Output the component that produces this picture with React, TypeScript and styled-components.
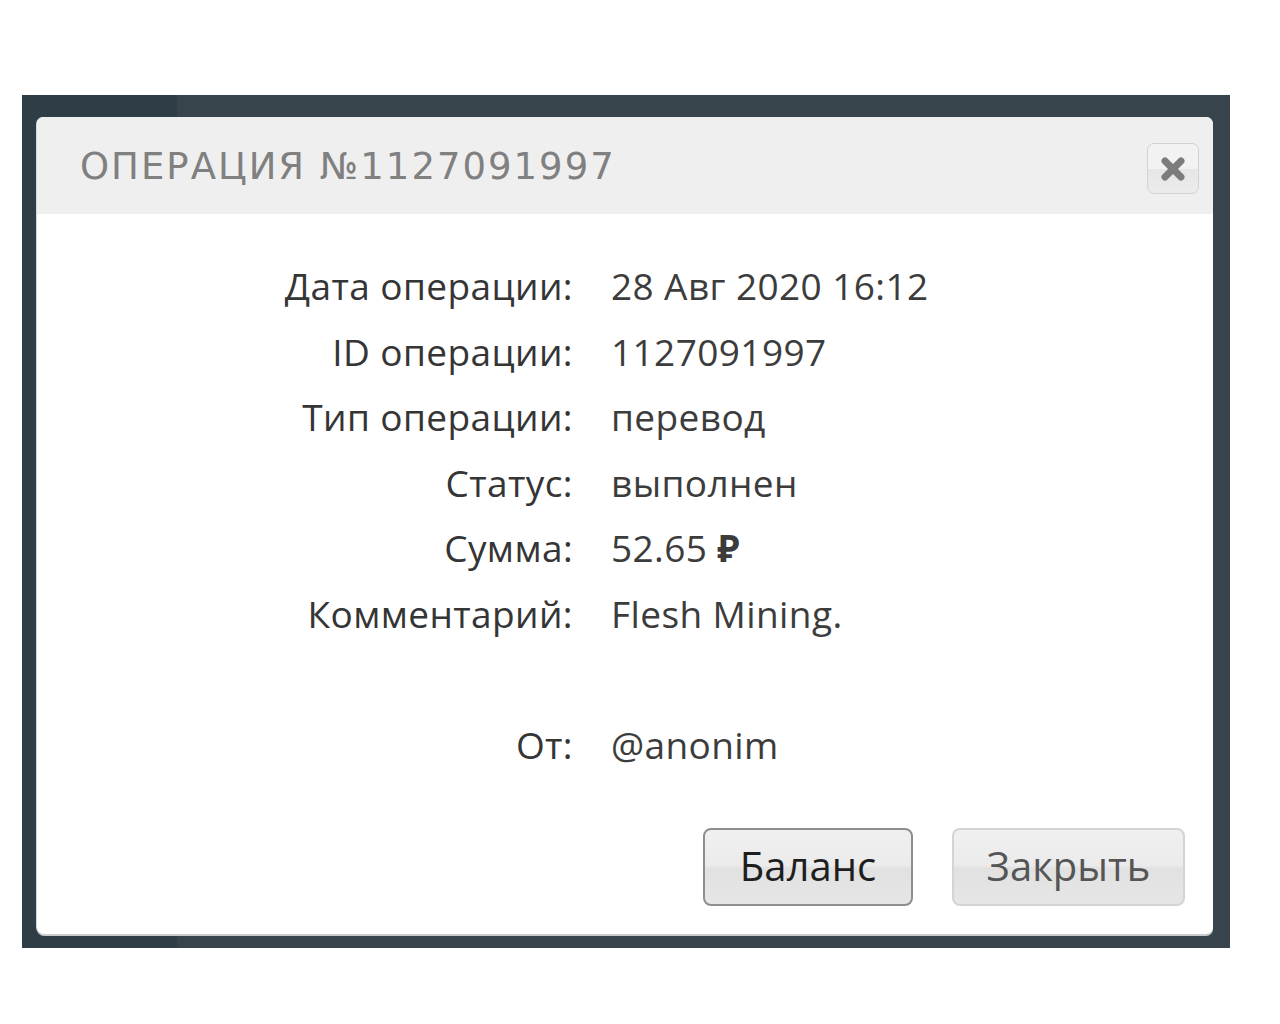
import React from "react";
import styled, { createGlobalStyle } from "styled-components";

const Global = createGlobalStyle`
  html, body { margin: 0; padding: 0; background: #ffffff; }
  body { width: 1280px; height: 1024px; overflow: hidden; }
`;

const Page = styled.div`
  width: 1280px;
  height: 1024px;
  padding-top: 95px;
  padding-left: 22px;
  box-sizing: border-box;
`;

const Backdrop = styled.div`
  width: 1208px;
  height: 853px;
  box-sizing: border-box;
  padding: 22px 17px 14px 15px;
  background: linear-gradient(to right, #2f3d47 0, #2f3d47 155px, #38444c 155px, #38444c 100%);
`;

const Modal = styled.div`
  width: 1176px;
  height: 817px;
  background: #ffffff;
  border-radius: 7px;
  box-shadow: 0 2px 0 #c9cbcd, -1px 0 0 #d6d8da;
  display: flex;
  flex-direction: column;
  overflow: hidden;
`;

const Header = styled.div`
  height: 97px;
  flex: none;
  background: #efefef;
  display: flex;
  align-items: center;
  justify-content: space-between;
  padding: 0 13px 0 43px;
`;

const Title = styled.h2`
  margin: 0;
  font-family: "DejaVu Sans", sans-serif;
  font-weight: 400;
  font-size: 37px;
  letter-spacing: 2px;
  color: #808080;
  padding-top: 2px;
`;

const CloseBtn = styled.button`
  width: 52px;
  height: 51px;
  border: 1.5px solid #d2d2d2;
  border-radius: 7px;
  background: linear-gradient(#f2f2f2 0, #f2f2f2 50%, #e6e6e6 50%, #ececec 100%);
  display: flex;
  align-items: center;
  justify-content: center;
  padding: 0;
  margin-top: 6px;
  margin-right: 1px;
`;

const Body = styled.div`
  flex: 1;
  display: flex;
  flex-direction: column;
  justify-content: space-between;
  padding: 39px 28px 28px 0;
`;

const Grid = styled.dl`
  margin: 0;
  display: grid;
  grid-template-columns: 536px 1fr;
  column-gap: 38px;
  grid-auto-rows: 65.5px;
  align-items: center;
  font-family: "Open Sans", "Noto Sans", sans-serif;
  font-size: 37px;
  letter-spacing: 0.4px;
  color: #363636;
`;

const Label = styled.dt`
  text-align: right;
  margin: 0;
  color: #353535;
`;

const Value = styled.dd`
  margin: 0;
  color: #3c3c3c;
`;

const Spacer = styled.div`
  grid-column: 1 / -1;
`;

const Actions = styled.div`
  display: flex;
  justify-content: flex-end;
  gap: 39px;
`;

const Button = styled.button<{ $primary?: boolean; $w: number }>`
  width: ${(p) => p.$w}px;
  height: 78px;
  border-radius: 8px;
  border: ${(p) => (p.$primary ? "2px solid #8e8e8e" : "2px solid #d4d4d4")};
  background: linear-gradient(#f0f0f0 0, #ebebeb 48%, #e1e1e1 52%, #e6e6e6 100%);
  font-family: "Open Sans", "Noto Sans", sans-serif;
  font-size: 40px;
  color: ${(p) => (p.$primary ? "#1e1e1e" : "#555555")};
  padding: 0 0 4px;
`;

const rows: [string, React.ReactNode][] = [
  ["Дата операции:", "28 Авг 2020 16:12"],
  ["ID операции:", "1127091997"],
  ["Тип операции:", "перевод"],
  ["Статус:", "выполнен"],
  ["Сумма:", <>52.65 <b style={{ fontWeight: 700 }}>₽</b></>],
  ["Комментарий:", "Flesh Mining."],
];

export default function App() {
  return (
    <Page>
      <Global />
      <Backdrop>
        <Modal>
          <Header>
            <Title>ОПЕРАЦИЯ №1127091997</Title>
            <CloseBtn aria-label="close">
              <svg width="26" height="26" viewBox="0 0 26 26">
                <path d="M5 5 L21 21 M21 5 L5 21" stroke="#7c7c7c" strokeWidth="7" strokeLinecap="round" />
              </svg>
            </CloseBtn>
          </Header>
          <Body>
            <Grid>
              {rows.map(([l, v]) => (
                <React.Fragment key={l}>
                  <Label>{l}</Label>
                  <Value>{v}</Value>
                </React.Fragment>
              ))}
              <Spacer />
              <Label>От:</Label>
              <Value>@anonim</Value>
            </Grid>
            <Actions>
              <Button $primary $w={210}>Баланс</Button>
              <Button $w={233}>Закрыть</Button>
            </Actions>
          </Body>
        </Modal>
      </Backdrop>
    </Page>
  );
}
